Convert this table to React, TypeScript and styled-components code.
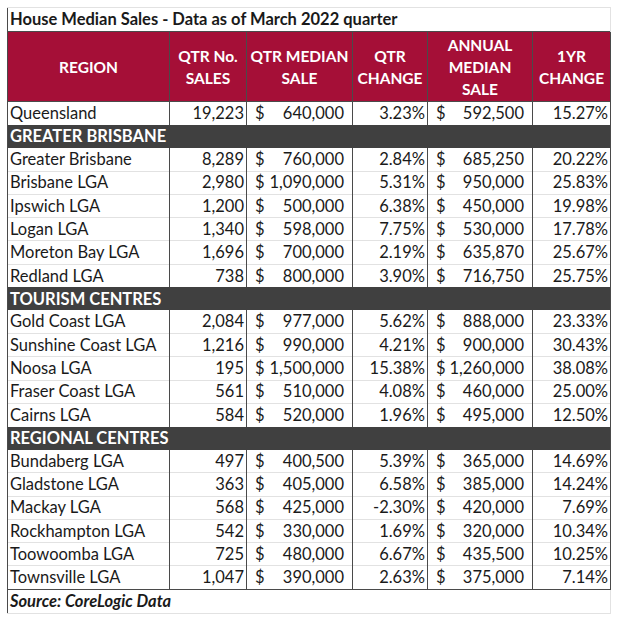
import { createGlobalStyle } from "styled-components";
import styled from "styled-components";

const red = "#a50f37";
const band = "#404040";
const rule = "#4a4a4a";
const grid = "#e2e2e2";

type Row = [string, string, string, string, string, string];

const sections: { title: string | null; rows: Row[] }[] = [
  { title: null, rows: [["Queensland", "19,223", "640,000", "3.23%", "592,500", "15.27%"]] },
  {
    title: "GREATER BRISBANE",
    rows: [
      ["Greater Brisbane", "8,289", "760,000", "2.84%", "685,250", "20.22%"],
      ["Brisbane LGA", "2,980", "1,090,000", "5.31%", "950,000", "25.83%"],
      ["Ipswich LGA", "1,200", "500,000", "6.38%", "450,000", "19.98%"],
      ["Logan LGA", "1,340", "598,000", "7.75%", "530,000", "17.78%"],
      ["Moreton Bay LGA", "1,696", "700,000", "2.19%", "635,870", "25.67%"],
      ["Redland LGA", "738", "800,000", "3.90%", "716,750", "25.75%"],
    ],
  },
  {
    title: "TOURISM CENTRES",
    rows: [
      ["Gold Coast LGA", "2,084", "977,000", "5.62%", "888,000", "23.33%"],
      ["Sunshine Coast LGA", "1,216", "990,000", "4.21%", "900,000", "30.43%"],
      ["Noosa LGA", "195", "1,500,000", "15.38%", "1,260,000", "38.08%"],
      ["Fraser Coast LGA", "561", "510,000", "4.08%", "460,000", "25.00%"],
      ["Cairns LGA", "584", "520,000", "1.96%", "495,000", "12.50%"],
    ],
  },
  {
    title: "REGIONAL CENTRES",
    rows: [
      ["Bundaberg LGA", "497", "400,500", "5.39%", "365,000", "14.69%"],
      ["Gladstone LGA", "363", "405,000", "6.58%", "385,000", "14.24%"],
      ["Mackay LGA", "568", "425,000", "-2.30%", "420,000", "7.69%"],
      ["Rockhampton LGA", "542", "330,000", "1.69%", "320,000", "10.34%"],
      ["Toowoomba LGA", "725", "480,000", "6.67%", "435,500", "10.25%"],
      ["Townsville LGA", "1,047", "390,000", "2.63%", "375,000", "7.14%"],
    ],
  },
];

const headings = [
  ["REGION"],
  ["QTR No.", "SALES"],
  ["QTR MEDIAN", "SALE"],
  ["QTR", "CHANGE"],
  ["ANNUAL", "MEDIAN", "SALE"],
  ["1YR", "CHANGE"],
];

const GlobalStyle = createGlobalStyle`
  body {
    margin: 0;
    background: #fff;
    font-family: Lato, "Open Sans", sans-serif;
    color: #1a1a1a;
  }
`;

const Page = styled.div`
  padding: 7px 0 0 7px;
`;

const Sheet = styled.table`
  width: 603px;
  border-collapse: collapse;
  table-layout: fixed;
  font-size: 16.5px;
  line-height: 1;
`;

const TitleCell = styled.td`
  height: 23px;
  padding: 0 2px;
  font-weight: 700;
  border-top: 1px solid ${grid};
  border-right: 1px solid ${grid};
  border-left: 1px solid ${rule};
  white-space: nowrap;
`;

const HeadCell = styled.th`
  height: 69px;
  padding: 0 1px;
  background: ${red};
  color: #fff;
  font-size: 15.5px;
  font-weight: 700;
  line-height: 22px;
  text-align: center;
  border: 1px solid ${rule};
  white-space: nowrap;
`;

const BandCell = styled.td`
  height: 23px;
  padding: 0 2px;
  background: ${band};
  color: #fff;
  font-weight: 700;
  text-align: left;
  border-left: 1px solid ${rule};
  border-right: 1px solid ${rule};
`;

const DataRow = styled.tr`
  height: 23.25px;
  & + & > td {
    border-top: 1px solid ${grid};
  }
`;

const Cell = styled.td<{ $align?: "left" | "right" }>`
  padding: 0 2px;
  text-align: ${(p) => p.$align ?? "right"};
  border-left: 1px solid ${rule};
  border-right: 1px solid ${rule};
  white-space: nowrap;
`;

const Money = styled.span`
  display: flex;
  justify-content: space-between;
  padding: 0 6px 0 6px;
`;

const SourceCell = styled.td`
  height: 23px;
  padding: 0 2px;
  font-weight: 700;
  font-style: italic;
  border-top: 1px solid ${rule};
  border-left: 1px solid ${rule};
  border-right: 1px solid ${grid};
  border-bottom: 1px solid ${grid};
`;

function Currency({ value }: { value: string }) {
  return (
    <Money>
      <span>$</span>
      <span>{value}</span>
    </Money>
  );
}

export default function App() {
  return (
    <Page>
      <GlobalStyle />
      <Sheet>
        <colgroup>
          <col style={{ width: 162 }} />
          <col style={{ width: 77 }} />
          <col style={{ width: 106 }} />
          <col style={{ width: 75 }} />
          <col style={{ width: 105 }} />
          <col style={{ width: 78 }} />
        </colgroup>
        <thead>
          <tr>
            <TitleCell colSpan={6}>House Median Sales - Data as of March 2022 quarter</TitleCell>
          </tr>
          <tr>
            {headings.map((lines) => (
              <HeadCell key={lines.join(" ")}>
                {lines.map((l, i) => (
                  <div key={i}>{l}</div>
                ))}
              </HeadCell>
            ))}
          </tr>
        </thead>
        {sections.map((s, i) => (
          <tbody key={i}>
            {s.title && (
              <tr>
                <BandCell colSpan={6}>{s.title}</BandCell>
              </tr>
            )}
            {s.rows.map((r) => (
              <DataRow key={r[0]}>
                <Cell $align="left">{r[0]}</Cell>
                <Cell>{r[1]}</Cell>
                <Cell>
                  <Currency value={r[2]} />
                </Cell>
                <Cell>{r[3]}</Cell>
                <Cell>
                  <Currency value={r[4]} />
                </Cell>
                <Cell>{r[5]}</Cell>
              </DataRow>
            ))}
          </tbody>
        ))}
        <tfoot>
          <tr>
            <SourceCell colSpan={6}>Source: CoreLogic Data</SourceCell>
          </tr>
        </tfoot>
      </Sheet>
    </Page>
  );
}
